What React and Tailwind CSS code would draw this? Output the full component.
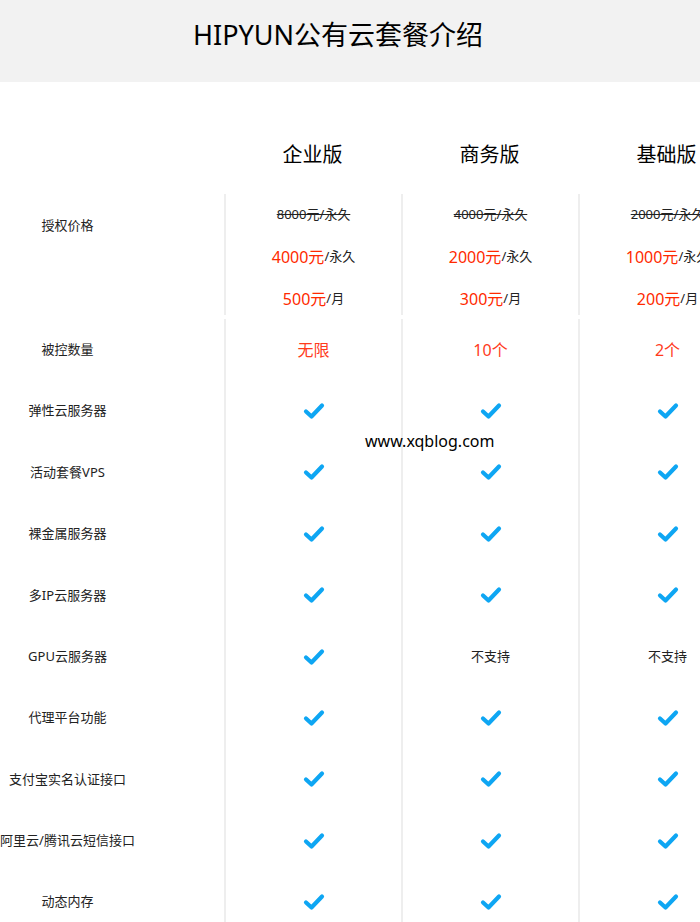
const plans = ['企业版', '商务版', '基础版'];

const prices = [
  { old: '8000元/永久', forever: '4000元', month: '500元' },
  { old: '4000元/永久', forever: '2000元', month: '300元' },
  { old: '2000元/永久', forever: '1000元', month: '200元' },
];

// true = check, string = text (red when highlight)
const rows = [
  { label: '被控数量', values: ['无限', '10个', '2个'], red: true },
  { label: '弹性云服务器', values: [true, true, true] },
  { label: '活动套餐VPS', values: [true, true, true] },
  { label: '裸金属服务器', values: [true, true, true] },
  { label: '多IP云服务器', values: [true, true, true] },
  { label: 'GPU云服务器', values: [true, '不支持', '不支持'] },
  { label: '代理平台功能', values: [true, true, true] },
  { label: '支付宝实名认证接口', values: [true, true, true] },
  { label: '阿里云/腾讯云短信接口', values: [true, true, true] },
  { label: '动态内存', values: [true, true, true] },
];

function Check() {
  return (
    <svg width="22" height="18" viewBox="0 0 22 18">
      <polyline
        points="3,9.5 8.5,14.5 19,3.5"
        fill="none"
        stroke="#0ea6f3"
        strokeWidth="4.2"
        strokeLinecap="round"
        strokeLinejoin="round"
      />
    </svg>
  );
}

export default function App() {
  return (
    <div className="relative w-[700px] h-[922px] overflow-hidden bg-white text-[#222] font-['Noto_Sans','Noto_Sans_CJK_SC',sans-serif]">
      {/* Header */}
      <div className="h-[82px] bg-[#f2f2f2] flex justify-center pr-[24px] pt-[17px]">
        <h1 className="text-[27px] leading-[36px] text-black font-normal">HIPYUN公有云套餐介绍</h1>
      </div>

      {/* Plan names */}
      <div className="flex h-[112px]">
        <div className="w-[224px] shrink-0" />
        {plans.map((p) => (
          <div key={p} className="w-[177px] shrink-0 pt-[59px] text-center text-[20px] leading-[28px] text-black">
            {p}
          </div>
        ))}
      </div>

      {/* Price row */}
      <div className="flex h-[121px]">
        <div className="w-[224px] shrink-0">
          <div className="w-[135px] pt-[21px] text-center text-[13px] leading-[20px]">授权价格</div>
        </div>
        {prices.map((pr, i) => (
          <div key={i} className="w-[177px] shrink-0 border-l-2 border-[#eeeeee] text-center">
            <div className="h-[42px] flex items-center justify-center text-[13px] line-through decoration-[#222]">
              {pr.old}
            </div>
            <div className="h-[42px] flex items-center justify-center">
              <span className="text-[16px] text-[#ff2a00]">{pr.forever}</span>
              <span className="text-[13px]">/永久</span>
            </div>
            <div className="h-[42px] flex items-center justify-center">
              <span className="text-[16px] text-[#ff2a00]">{pr.month}</span>
              <span className="text-[13px]">/月</span>
            </div>
          </div>
        ))}
      </div>

      {/* Feature rows */}
      <div className="mt-[4px]">
        {rows.map((r) => (
          <div key={r.label} className="flex h-[61.4px]">
            <div className="w-[224px] shrink-0 flex items-center">
              <div className="w-[135px] text-center text-[13px] whitespace-nowrap">{r.label}</div>
            </div>
            {r.values.map((v, i) => (
              <div key={i} className="w-[177px] shrink-0 border-l-2 border-[#eeeeee] flex items-center justify-center">
                {v === true ? (
                  <Check />
                ) : r.red ? (
                  <span className="text-[16px] text-[#ff3b1c]">{v}</span>
                ) : (
                  <span className="text-[13px]">{v}</span>
                )}
              </div>
            ))}
          </div>
        ))}
      </div>

      {/* Watermark */}
      <div className="absolute left-[365px] top-[429px] text-[16px] leading-[24px] text-black">www.xqblog.com</div>
    </div>
  );
}
